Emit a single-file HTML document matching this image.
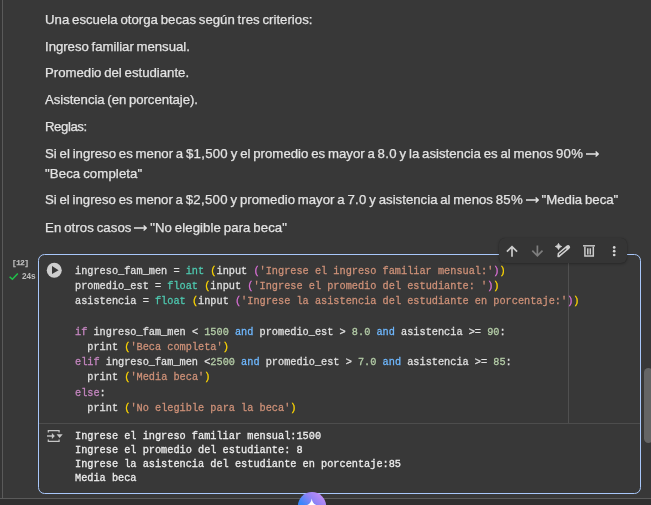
<!DOCTYPE html>
<html lang="es">
<head>
<meta charset="utf-8">
<title>Colab</title>
<style>
html,body{margin:0;padding:0;}
body{width:651px;height:505px;overflow:hidden;background:#383838;position:relative;font-family:"Liberation Sans",sans-serif;}
.abs{position:absolute;}
.md,.code,.out,#cnt,#sec{will-change:transform;-webkit-font-smoothing:antialiased;}
/* frame lines */
#leftbar{left:0;top:0;width:2px;height:498px;background:#353535;}
#leftline{left:2px;top:0;width:1px;height:498px;background:#5a5a5a;}
#botline{left:0;top:498px;width:651px;height:1px;background:#5a5a5a;}
#botstrip{left:0;top:499px;width:651px;height:6px;background:#303030;}
/* markdown text */
.md{left:44.8px;color:#e3e3e3;font-size:13.2px;line-height:20px;white-space:nowrap;-webkit-text-stroke:0.25px #e3e3e3;}
.ar{display:inline-block;vertical-align:baseline;position:relative;top:-0.4px;letter-spacing:0;}
/* cell */
#cell{left:38px;top:254px;width:601px;height:238px;border:1px solid #a8c7fa;border-radius:6.5px;background:#383838;}
#sep{left:39px;top:423px;width:601px;height:1px;background:#4d4d4d;}
#ruler{left:568px;top:255px;width:1px;height:168px;background:#505050;}
.code{left:75px;color:#e0e0e0;font-family:"Liberation Mono",monospace;font-size:10.26px;line-height:15.2px;white-space:pre;-webkit-text-stroke:0.27px;}
.out{left:74.5px;color:#ececec;font-family:"Liberation Mono",monospace;font-size:10.26px;line-height:13.95px;white-space:pre;-webkit-text-stroke:0.3px;}
.k{color:#c586c0}.b{color:#6fb8ff}.t{color:#4ec9b0}.s{color:#ce9178}.n{color:#b5cea8}.y{color:#ffd700}.p{color:#da70d6}
/* gutter */
#cnt{left:12.2px;top:256.6px;-webkit-text-stroke:0.25px;color:#bbbbbb;font-family:"Liberation Mono",monospace;font-size:7.4px;line-height:12px;font-weight:bold;letter-spacing:-0.25px;}
#sec{left:21.6px;top:270.7px;color:#bcbcbc;font-family:"Liberation Sans",sans-serif;font-size:8.2px;line-height:12px;font-weight:bold;}
/* toolbar */
#tb{left:499px;top:238.4px;width:128px;height:24.8px;border-radius:6px;background:#353535;box-shadow:0 1px 3px rgba(0,0,0,.30),0 0 1px rgba(0,0,0,.3);}
/* scrollbar */
#thumb{left:643.8px;top:367.6px;width:9px;height:75.3px;border-radius:4.5px;background:#656565;}
</style>
</head>
<body>
<div class="abs" id="leftbar"></div>
<div class="abs" id="leftline"></div>
<div class="abs" id="botline"></div>
<div class="abs" id="botstrip"></div>

<!--MD-->
<div class="abs md" style="top:9.9px;letter-spacing:0.02px;word-spacing:-0.90px">Una escuela otorga becas según tres criterios:</div>
<div class="abs md" style="top:36.8px;letter-spacing:-0.03px;word-spacing:-0.90px">Ingreso familiar mensual.</div>
<div class="abs md" style="top:63.4px;letter-spacing:-0.00px;word-spacing:-0.90px">Promedio del estudiante.</div>
<div class="abs md" style="top:90.1px;letter-spacing:-0.05px;word-spacing:-0.90px">Asistencia (en porcentaje).</div>
<div class="abs md" style="top:116.7px;letter-spacing:-0.42px;word-spacing:-0.90px">Reglas:</div>
<div class="abs md" style="top:143.6px;letter-spacing:0.02px;word-spacing:-0.90px">Si el ingreso es menor a <span style="letter-spacing:0.28px">$1,500</span> y el promedio es mayor a <span style="letter-spacing:0.28px">8.0</span> y la asistencia es al menos <span style="letter-spacing:0.28px">90%</span> <svg class="ar" width="13" height="8" viewBox="0 0 13 8"><path d="M0 4 H12.3 M9.6 1.4 L12.3 4 L9.6 6.6" fill="none" stroke="#e3e3e3" stroke-width="1.35"/></svg></div>
<div class="abs md" style="top:163.8px;letter-spacing:0.11px;word-spacing:-0.90px">&quot;Beca completa&quot;</div>
<div class="abs md" style="top:190.4px;letter-spacing:0.01px;word-spacing:-0.90px">Si el ingreso es menor a <span style="letter-spacing:0.29px">$2,500</span> y promedio mayor a <span style="letter-spacing:0.29px">7.0</span> y asistencia al menos <span style="letter-spacing:0.29px">85%</span> <svg class="ar" width="13" height="8" viewBox="0 0 13 8"><path d="M0 4 H12.3 M9.6 1.4 L12.3 4 L9.6 6.6" fill="none" stroke="#e3e3e3" stroke-width="1.35"/></svg> &quot;Media beca&quot;</div>
<div class="abs md" style="top:217.6px;letter-spacing:0.08px;word-spacing:-0.90px">En otros casos <svg class="ar" width="13" height="8" viewBox="0 0 13 8"><path d="M0 4 H12.3 M9.6 1.4 L12.3 4 L9.6 6.6" fill="none" stroke="#e3e3e3" stroke-width="1.35"/></svg> &quot;No elegible para beca&quot;</div>
<!--/MD-->

<div class="abs" id="cell"></div>
<div class="abs" id="sep"></div>
<div class="abs" id="ruler"></div>

<div class="abs" id="cnt">[12]</div>
<svg class="abs" style="left:9px;top:273px" width="10" height="8" viewBox="0 0 10 8"><path d="M0.6 3.7 L3.4 6.3 L8.8 0.6" fill="none" stroke="#1fc24a" stroke-width="1.5"/></svg>
<div class="abs" id="sec">24s</div>

<svg class="abs" style="left:46px;top:262px" width="17" height="17" viewBox="0 0 17 17"><circle cx="8.25" cy="8.25" r="7.5" fill="#cdcdcd"/><path d="M6 4.1 L12.6 8.15 L6 12 Z" fill="#363636"/></svg>

<div class="abs code" style="top:263.6px">ingreso_fam_men = <span class="t">int</span> <span class="y">(</span>input <span class="p">(</span><span class="s">'Ingrese el ingreso familiar mensual:'</span><span class="p">)</span><span class="y">)</span>
promedio_est = <span class="t">float</span> <span class="y">(</span>input <span class="p">(</span><span class="s">'Ingrese el promedio del estudiante: '</span><span class="p">)</span><span class="y">)</span>
asistencia = <span class="t">float</span> <span class="y">(</span>input <span class="p">(</span><span class="s">'Ingrese la asistencia del estudiante en porcentaje:'</span><span class="p">)</span><span class="y">)</span>

<span class="k">if</span> ingreso_fam_men &lt; <span class="n">1500</span> <span class="b">and</span> promedio_est &gt; <span class="n">8.0</span> <span class="b">and</span> asistencia &gt;= <span class="n">90</span>:
  print <span class="y">(</span><span class="s">'Beca completa'</span><span class="y">)</span>
<span class="k">elif</span> ingreso_fam_men &lt;<span class="n">2500</span> <span class="b">and</span> promedio_est &gt; <span class="n">7.0</span> <span class="b">and</span> asistencia &gt;= <span class="n">85</span>:
  print <span class="y">(</span><span class="s">'Media beca'</span><span class="y">)</span>
<span class="k">else</span>:
  print <span class="y">(</span><span class="s">'No elegible para la beca'</span><span class="y">)</span></div>

<svg class="abs" style="left:46px;top:429px" width="18" height="14" viewBox="0 0 18 14"><g fill="none" stroke="#c6c6c6" stroke-width="1.2"><path d="M2.3 3.4 V1.6 H13.1 V3.4"/><path d="M2.3 10.6 V12.4 H13.1 V10.6"/><path d="M1 7 H6.5" stroke-width="1.4"/></g><path d="M5.9 4.1 L8.8 7 L5.9 9.9 Z" fill="#c6c6c6"/><path d="M10.6 5.3 H16.7 L13.65 8.9 Z" fill="#c6c6c6"/></svg>

<div class="abs out" style="top:429.5px">Ingrese el ingreso familiar mensual:1500
Ingrese el promedio del estudiante: 8
Ingrese la asistencia del estudiante en porcentaje:85
Media beca</div>

<div class="abs" id="tb"></div>
<svg class="abs" style="left:499px;top:238px" width="128" height="26" viewBox="499 238 128 26">
<g fill="none" stroke="#cccccc" stroke-width="1.7"><path d="M512 256.8 V246.8 M506.9 251.7 L512 246.6 L517.1 251.7"/></g>
<g fill="none" stroke="#7e7e7e" stroke-width="1.7"><path d="M537.4 245.4 V255.6 M532.3 250.7 L537.4 255.8 L542.5 250.7"/></g>
<path d="M558.5 243.4 C559.2 245.1 560 245.8 561.7 246.5 C560 247.2 559.2 247.9 558.5 249.6 C557.8 247.9 557 247.2 555.3 246.5 C557 245.8 557.8 245.1 558.5 243.4 Z" fill="#d4d4d4" stroke="#d4d4d4" stroke-width="0.8" stroke-linejoin="round"/>
<g transform="translate(563.5 250.9) rotate(-40)"><path d="M-7.7 0.8 L-5.6 -1.3 H5.9 A1.3 1.3 0 0 1 5.9 1.3 H-7.3 Z" fill="none" stroke="#d2d2d2" stroke-width="1.5" stroke-linejoin="round"/><path d="M3.6 -1.3 H5.9 A1.3 1.3 0 0 1 5.9 1.3 H3.6 Z" fill="#d2d2d2"/></g>
<g fill="none" stroke="#cccccc" stroke-width="1.5"><path d="M583 245.8 H595" stroke-width="1.4"/><path d="M584.9 246.4 V255.9 H593.3 V246.4"/><path d="M587.8 248.2 V254.4 M590.3 248.2 V254.4" stroke-width="1.5"/></g>
<g fill="#d4d4d4"><circle cx="614.2" cy="247.4" r="1.35"/><circle cx="614.2" cy="251.2" r="1.35"/><circle cx="614.2" cy="255" r="1.35"/></g>
</svg>

<div class="abs" id="thumb"></div>

<svg class="abs" style="left:297px;top:491px" width="30" height="14" viewBox="0 0 30 14"><defs><linearGradient id="gg" x1="0.1" y1="0.9" x2="0.9" y2="0.1"><stop offset="0" stop-color="#1486ff"/><stop offset="0.35" stop-color="#3f86fb"/><stop offset="0.65" stop-color="#8f83f6"/><stop offset="1" stop-color="#c58df5"/></linearGradient></defs><circle cx="15" cy="15.2" r="14.1" fill="url(#gg)"/><path d="M14.7 7.5 C15.2 11 16.3 12.8 19.2 14 L10.2 14 C13.1 12.8 14.2 11 14.7 7.5 Z" fill="#fff"/></svg>
</body>
</html>
